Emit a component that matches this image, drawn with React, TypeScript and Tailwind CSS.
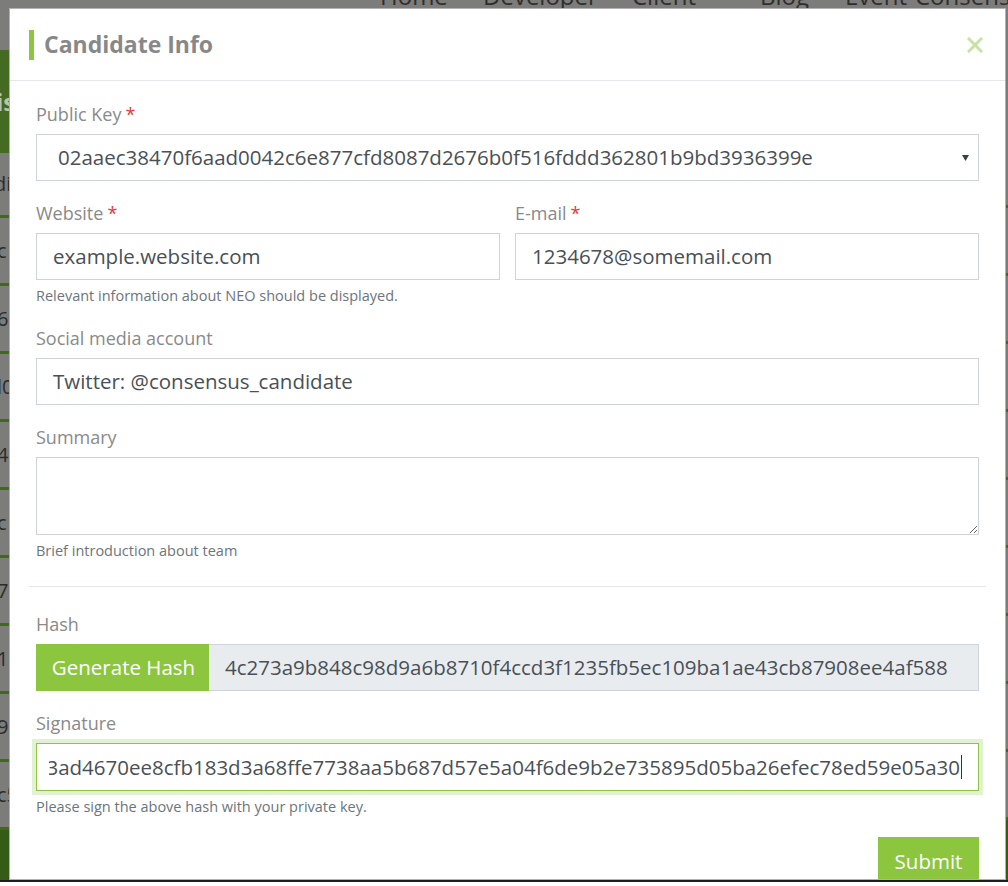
const GREEN = "#8cc63f";

function Label({ text, required }: { text: string; required?: boolean }) {
  return (
    <div className="text-[18px] leading-[27px] mb-[6px] text-[#8a8a8a]">
      {text}
      {required && <span className="text-[#e4393c] ml-[4px]">*</span>}
    </div>
  );
}

function Help({ text }: { text: string }) {
  return <div className="mt-[5px] text-[14.5px] leading-[21px] text-[#6c757d]">{text}</div>;
}

function Field({ value }: { value: string }) {
  return (
    <div className="h-[47px] border border-[#ced4da] pl-[16px] flex items-center text-[20.5px] text-[#495057] whitespace-nowrap overflow-hidden">
      {value}
    </div>
  );
}

function TopNav() {
  const items = [
    ["Home", "w-[103px]"],
    ["Developer", "w-[149px]"],
    ["Client", "w-[128px]"],
    ["Blog", "w-[85px]"],
    ["Event", "w-[70px]"],
    ["Consensus", "w-[120px]"],
  ];
  return (
    <div className="h-[8px] overflow-hidden flex pl-[380px]">
      {items.map(([t, w]) => (
        <div key={t} className={`${w} shrink-0 text-[24px] leading-none -mt-[16px] text-[#2e2e2c] whitespace-nowrap`}>
          {t}
        </div>
      ))}
    </div>
  );
}

function SideStrip({ texts }: { texts: string[] }) {
  return (
    <div className="w-[9px] shrink-0 flex flex-col overflow-hidden">
      <div className="h-[42px] shrink-0" />
      <div className="h-[103px] shrink-0 bg-[#456a22] flex items-center overflow-hidden">
        <span className="text-[24px] font-bold text-[#b9c4ac] -ml-[4px] whitespace-nowrap">is</span>
      </div>
      <div className="h-[65px] shrink-0 border-b-[3px] border-[#3f6a1a] flex items-center overflow-hidden">
        <span className="text-[20px] text-[#2c2c2a] -ml-[6px] whitespace-nowrap">{texts[0]}</span>
      </div>
      {texts.slice(1).map((t, i) => (
        <div key={i} className="h-[68px] shrink-0 border-b-[3px] border-[#3f6a1a] flex items-center overflow-hidden">
          <span className="text-[20px] text-[#2c2c2a] -ml-[3px] whitespace-nowrap">{t}</span>
        </div>
      ))}
      <div className="flex-1 bg-[#355b17]" />
    </div>
  );
}

function RightStrip() {
  return (
    <div className="w-[2px] shrink-0 flex flex-col">
      <div className="h-[132px] shrink-0" />
      {Array.from({ length: 10 }).map((_, i) => (
        <div key={i} className="h-[68px] shrink-0 border-b-[3px] border-[#3f6a1a]" />
      ))}
      <div className="flex-1 bg-[#355b17]" />
    </div>
  );
}

function Modal() {
  return (
    <div className="w-[997px] shrink-0 bg-white border border-black/30 overflow-hidden flex flex-col">
      <div className="h-[72px] shrink-0 border-b border-[#e6e9ec] flex items-center justify-between pl-[19px] pr-[22px]">
        <div className="flex items-center gap-[10px]">
          <div className="w-[5px] h-[30px]" style={{ background: GREEN }} />
          <div className="text-[23px] font-bold text-[#888888]">Candidate Info</div>
        </div>
        <svg width="16" height="16" viewBox="0 0 16 16">
          <path d="M2 2 L14 14 M14 2 L2 14" stroke="#c8e2a6" strokeWidth="3" strokeLinecap="square" />
        </svg>
      </div>

      <div className="px-[26px] pt-[20px]">
        <div className="mb-[19px]">
          <Label text="Public Key" required />
          <div className="h-[47px] border border-[#ced4da] pl-[21px] pr-[9px] flex items-center justify-between text-[20.5px] text-[#495057]">
            <span className="whitespace-nowrap">02aaec38470f6aad0042c6e877cfd8087d2676b0f516fddd362801b9bd3936399e</span>
            <svg width="7" height="6" viewBox="0 0 7 6">
              <path d="M0 0 H7 L3.5 6 Z" fill="#3a3f44" />
            </svg>
          </div>
        </div>

        <div className="grid grid-cols-2 gap-[15px] mb-[19px]">
          <div>
            <Label text="Website" required />
            <Field value="example.website.com" />
            <Help text="Relevant information about NEO should be displayed." />
          </div>
          <div>
            <Label text="E-mail" required />
            <Field value="1234678@somemail.com" />
          </div>
        </div>

        <div className="mb-[19px]">
          <Label text="Social media account" />
          <Field value="Twitter: @consensus_candidate" />
        </div>

        <div>
          <Label text="Summary" />
          <textarea
            readOnly
            className="block w-full h-[78px] border border-[#ced4da] outline-none px-[16px] text-[20px]"
          />
          <Help text="Brief introduction about team" />
        </div>

        <div className="h-px bg-[#e3e6e9] -mx-[7px] mt-[25px] mb-[24px]" />

        <div className="mb-[19px]">
          <Label text="Hash" />
          <div className="flex h-[47px]">
            <div className="w-[173px] shrink-0 flex items-center justify-center pl-[2px] text-white text-[20.5px]" style={{ background: GREEN }}>
              Generate Hash
            </div>
            <div className="flex-1 bg-[#e9ecef] border border-l-0 border-[#ced4da] pl-[16px] flex items-center text-[20.5px] text-[#495057] whitespace-nowrap overflow-hidden">
              4c273a9b848c98d9a6b8710f4ccd3f1235fb5ec109ba1ae43cb87908ee4af588
            </div>
          </div>
        </div>

        <div>
          <Label text="Signature" />
          <div className="h-[48px] border border-[#8cc63f] shadow-[0_0_0_4px_#e2f1d1] pl-[12px] pr-[16px] flex items-center">
            <div className="flex-1 overflow-hidden flex justify-end items-center text-[20.5px] text-[#495057] whitespace-nowrap">
              <span>e1f03ad4670ee8cfb183d3a68ffe7738aa5b687d57e5a04f6de9b2e735895d05ba26efec78ed59e05a30</span>
              <span className="w-px h-[24px] bg-[#333] ml-px shrink-0" />
            </div>
          </div>
          <Help text="Please sign the above hash with your private key." />
        </div>

        <div className="flex justify-end mt-[20px]">
          <div className="w-[101px] h-[48px] flex items-center justify-center text-white text-[20.5px]" style={{ background: GREEN }}>
            Submit
          </div>
        </div>
      </div>
    </div>
  );
}

export default function App() {
  return (
    <div className="w-[1008px] h-[886px] overflow-hidden bg-[#7c7c7a] flex flex-col font-['Open_Sans',sans-serif]">
      <TopNav />
      <div className="flex flex-1 min-h-0">
        <SideStrip texts={["di", "c", "6", "l0", "4", "c", "70", "1", "9", "c5"]} />
        <Modal />
        <RightStrip />
      </div>
      <div className="h-[2px] shrink-0 bg-[#1e1e1e]" />
      <div className="h-[4px] shrink-0 bg-white" />
    </div>
  );
}
